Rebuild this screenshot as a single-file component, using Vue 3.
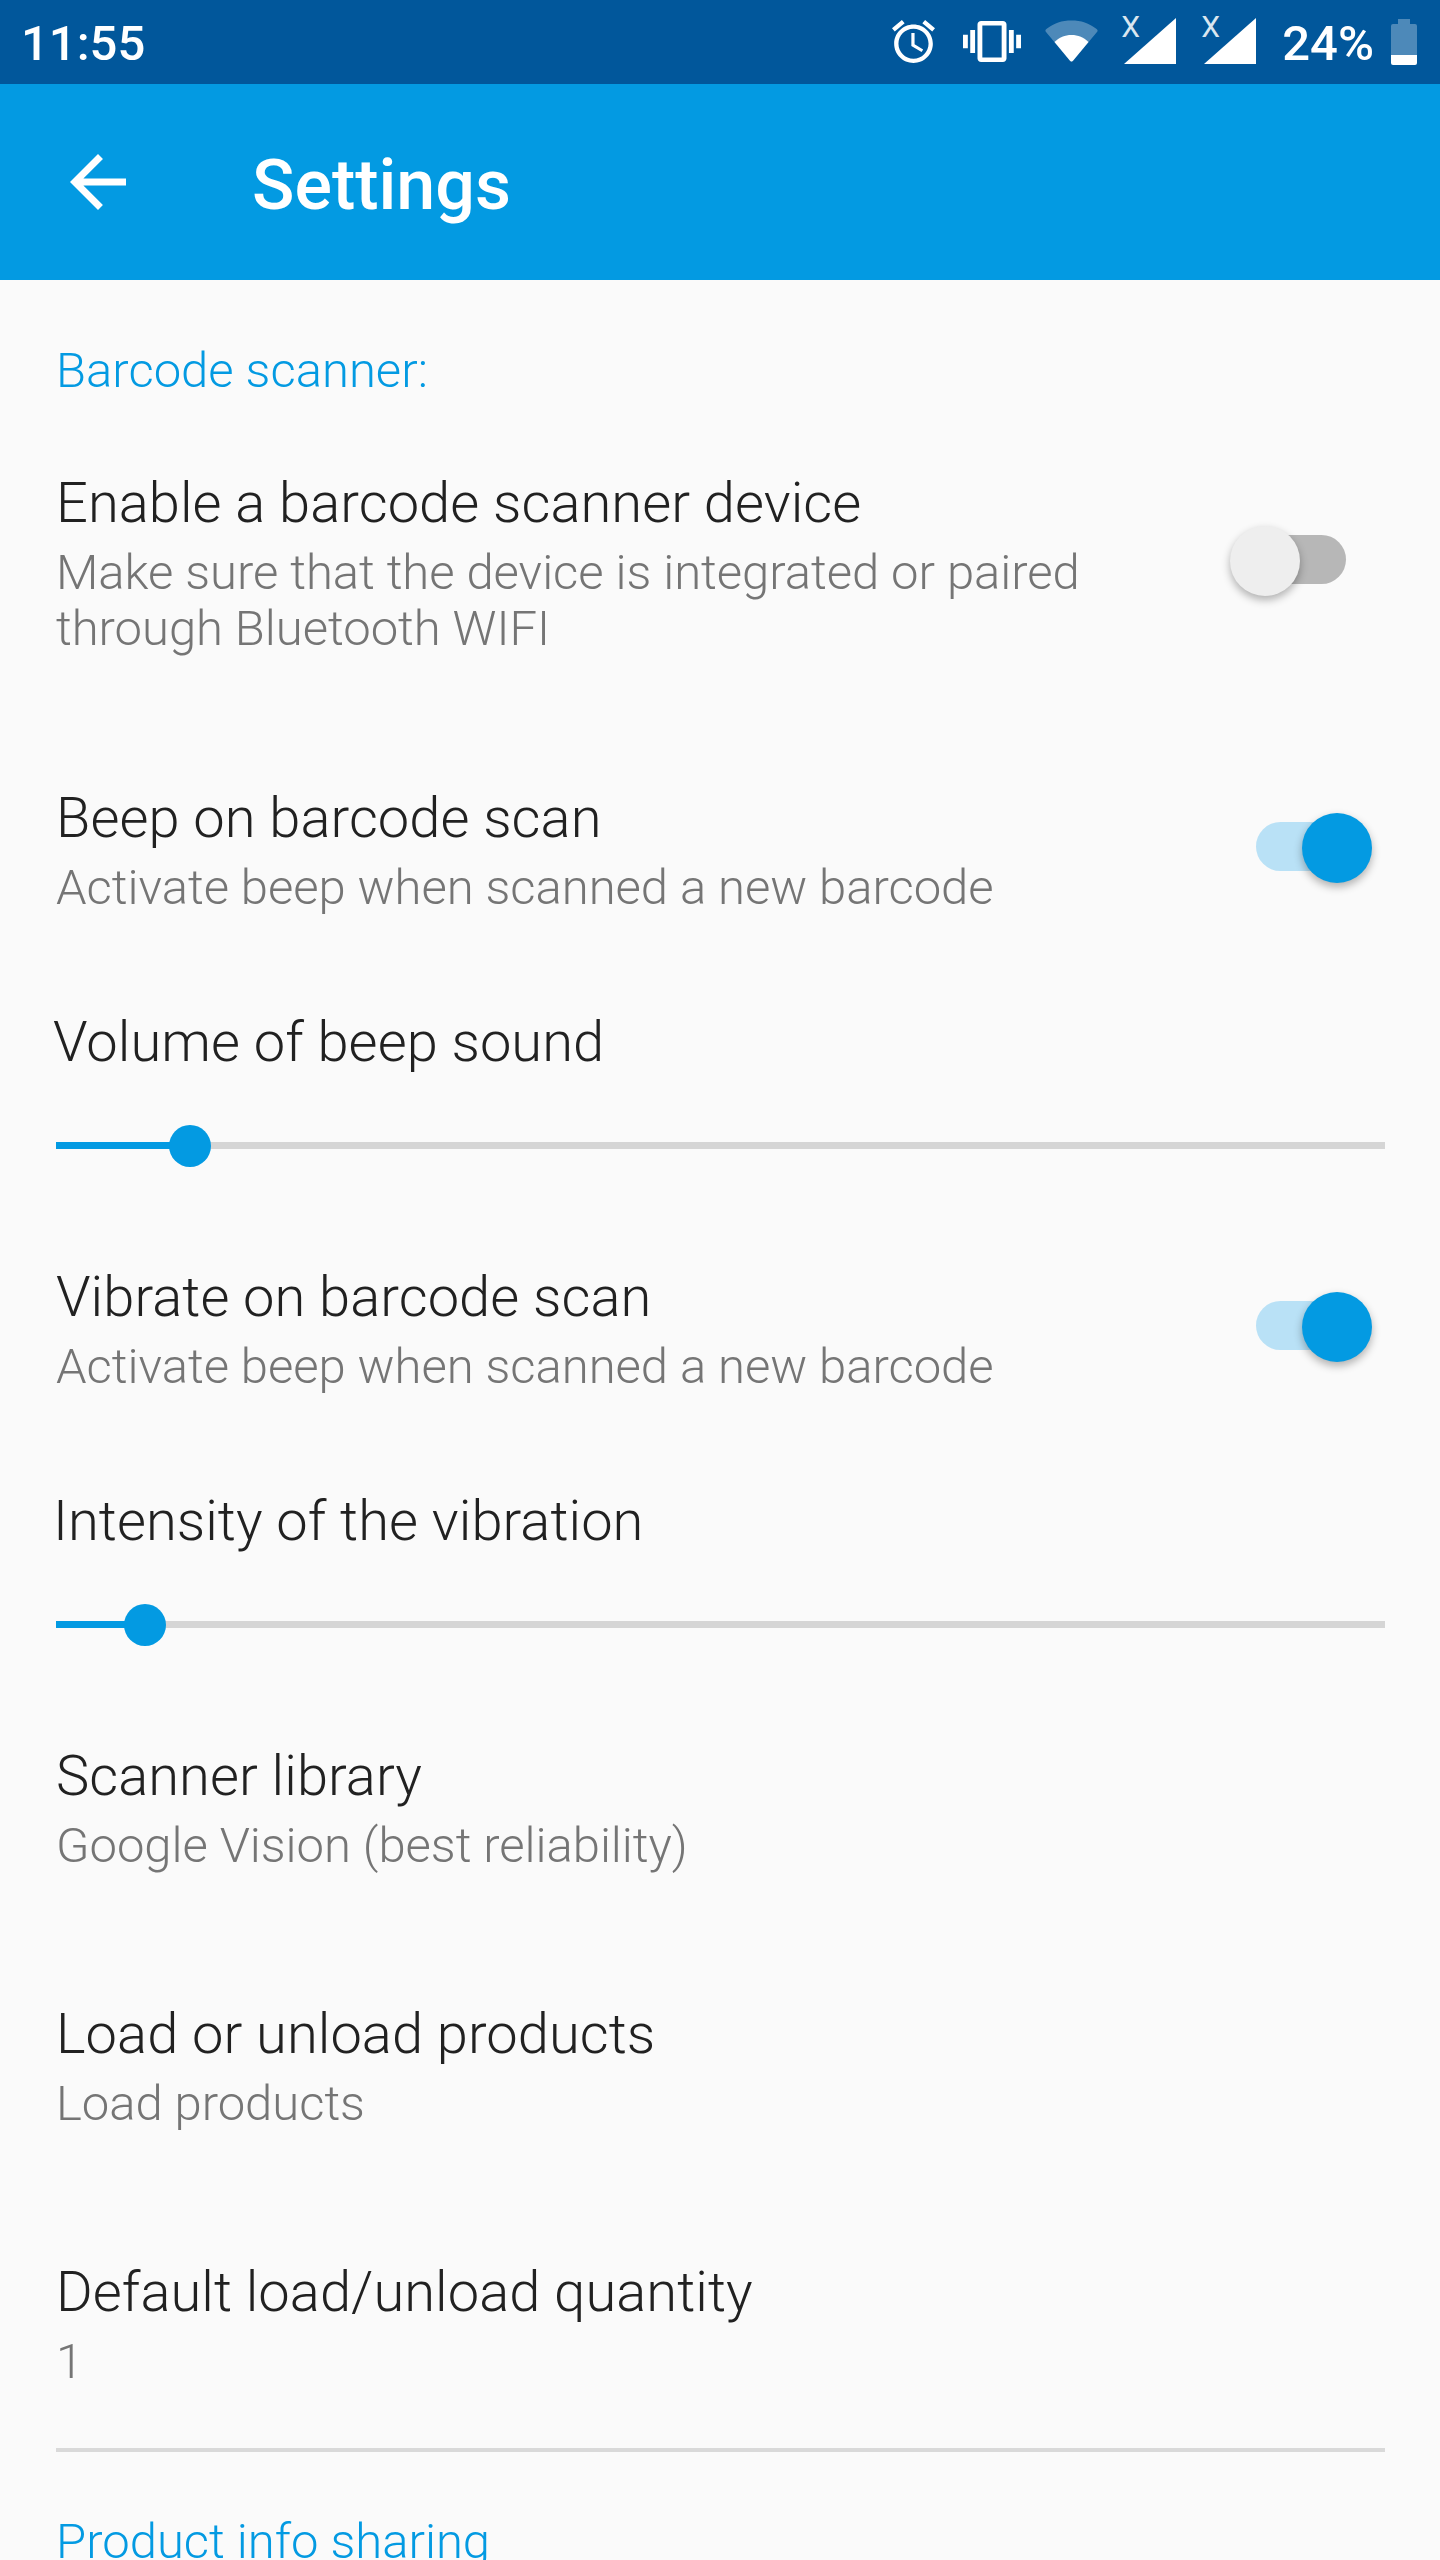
<template>
  <div class="screen">
    <!-- status bar -->
    <div class="status-bar">
      <span class="time">11:55</span>
      <div class="status-icons">
        <svg class="ic-alarm" viewBox="2 1.86 20 20.14" preserveAspectRatio="none">
          <path fill="#fff" d="M22 5.72l-4.6-3.86-1.29 1.53 4.6 3.86L22 5.72zM7.88 3.39L6.6 1.86 2 5.71l1.29 1.53 4.59-3.85zM12.5 8H11v6l4.75 2.85.75-1.23-4-2.37V8zM12 4c-4.97 0-9 4.03-9 9s4.03 9 9 9 9-4.03 9-9-4.03-9-9-9zm0 16c-3.87 0-7-3.13-7-7s3.13-7 7-7 7 3.13 7 7-3.13 7-7 7z" />
        </svg>
        <svg class="ic-vibrate" viewBox="0 3 24 18" preserveAspectRatio="none">
          <path fill="#fff" d="M0 15h2V9H0v6zm3 2h2V7H3v10zm19-8v6h2V9h-2zm-3 8h2V7h-2v10zM16.5 3h-9C6.67 3 6 3.67 6 4.5v15c0 .83.67 1.5 1.5 1.5h9c.83 0 1.5-.67 1.5-1.5v-15c0-.83-.67-1.5-1.5-1.5zM16 19H8V5h8v14z" />
        </svg>
        <svg class="ic-wifi" viewBox="0 0 53 42">
          <path fill="#fff" fill-opacity="0.3" d="M0.6 11.5 Q0 9.8 1.4 9 C9 3 17 0.5 26.5 0.5 C36 0.5 44 3 51.6 9 Q53 9.8 52.4 11.5 L28 40.8 Q26.5 42.5 25 40.8 Z" />
          <path fill="#fff" d="M9.5 22 C14 17.5 20 15 26.5 15 C33 15 39 17.5 43.5 22 L28.2 40.6 Q26.5 42.5 24.8 40.6 Z" />
        </svg>
        <div v-for="n in 2" :key="n" class="signal">
          <svg viewBox="0 0 52 46"><path fill="#fff" d="M52 0V46H0Z" /></svg>
          <span class="signal-x">X</span>
        </div>
        <span class="battery-text">24%</span>
        <svg class="ic-battery" viewBox="0 0 26 46">
          <path fill="#fff" fill-opacity="0.3" d="M7 0h12v5h5q2 0 2 2v29H0V7q0-2 2-2h5z" />
          <path fill="#fff" d="M0 36h26v8q0 2-2 2H2q-2 0-2-2z" />
        </svg>
      </div>
    </div>

    <!-- app bar -->
    <div class="app-bar">
      <svg class="back" viewBox="4 4 16 16">
        <path fill="#fff" d="M20 11H7.83l5.59-5.59L12 4l-8 8 8 8 1.41-1.41L7.83 13H20v-2z" />
      </svg>
      <span class="app-title">Settings</span>
    </div>

    <div class="content">
      <div class="category">Barcode scanner:</div>

      <div v-for="item in settings" :key="item.title" :class="['row', item.type]">
        <div class="row-main">
          <div class="row-text">
            <div class="title">{{ item.title }}</div>
            <div v-if="item.sub" class="sub">{{ item.sub }}</div>
          </div>
          <div v-if="item.type === 'toggle' || item.type === 'tall'" :class="['switch', { on: item.on }]">
            <div class="track"></div>
            <div class="thumb"></div>
          </div>
        </div>
        <div v-if="item.type === 'slider'" class="seek">
          <div class="seek-track"></div>
          <div class="seek-fill" :style="{ width: item.pos + 'px' }"></div>
          <div class="seek-thumb" :style="{ left: item.pos - 21 + 'px' }"></div>
        </div>
      </div>

      <div class="divider"></div>
      <div class="category second">Product info sharing</div>
    </div>
  </div>
</template>

<script setup>
const settings = [
  {
    type: "tall",
    title: "Enable a barcode scanner device",
    sub: "Make sure that the device is integrated or paired through Bluetooth WIFI",
    on: false,
  },
  { type: "toggle", title: "Beep on barcode scan", sub: "Activate beep when scanned a new barcode", on: true },
  { type: "slider", title: "Volume of beep sound", pos: 134 },
  { type: "toggle", title: "Vibrate on barcode scan", sub: "Activate beep when scanned a new barcode", on: true },
  { type: "slider", title: "Intensity of the vibration", pos: 89 },
  { type: "plain", title: "Scanner library", sub: "Google Vision (best reliability)" },
  { type: "plain", title: "Load or unload products", sub: "Load products" },
  { type: "last", title: "Default load/unload quantity", sub: "1" },
];
</script>

<style>
html,
body {
  margin: 0;
  background: #fafafa;
}
</style>

<style scoped>
.screen {
  width: 1440px;
  height: 2560px;
  overflow: hidden;
  background: #fafafa;
  font-family: Roboto, "Liberation Sans", sans-serif;
}

.status-bar {
  height: 84px;
  box-sizing: border-box;
  padding: 0 23px 0 21px;
  background: #01579b;
  color: #fff;
  display: flex;
  align-items: center;
  justify-content: space-between;
}

.time {
  font-size: 49px;
  font-weight: 500;
  line-height: 84px;
  padding-top: 3px;
}

.status-icons {
  display: flex;
  align-items: flex-start;
  height: 84px;
}

.ic-alarm {
  width: 43px;
  height: 43px;
  margin-top: 20px;
}

.ic-vibrate {
  width: 58px;
  height: 41px;
  margin: 21px 0 0 28px;
}

.ic-wifi {
  width: 53px;
  height: 42px;
  margin: 20px 0 0 24px;
}

.signal {
  position: relative;
  width: 52px;
  height: 46px;
  margin: 18px 0 0 26px;
}

.signal svg {
  display: block;
  width: 52px;
  height: 46px;
}

.signal-x {
  position: absolute;
  left: -3px;
  top: -6px;
  font-size: 30px;
  line-height: 30px;
  color: #d9e6f0;
}

.signal + .signal {
  margin-left: 28px;
}

.battery-text {
  margin-left: 26px;
  font-size: 49px;
  font-weight: 500;
  line-height: 84px;
  padding-top: 2px;
}

.ic-battery {
  width: 26px;
  height: 46px;
  margin: 19px 0 0 17px;
}

.app-bar {
  height: 196px;
  background: #039ae2;
  display: flex;
  align-items: center;
}

.back {
  width: 56px;
  height: 56px;
  margin-left: 70px;
}

.app-title {
  margin-left: 126px;
  padding-top: 5px;
  color: #fff;
  font-size: 70px;
  font-weight: 500;
}

.content {
  padding: 63px 55px 0 56px;
}

.category {
  margin-bottom: 26px;
  color: #039ae2;
  font-size: 49px;
  font-weight: 300;
  line-height: 56px;
}

.row {
  padding: 40px 0 48px;
}

.row.tall {
  padding-bottom: 83px;
}

.row.plain {
  padding-bottom: 82px;
}

.row.last {
  padding-bottom: 58px;
}

.row.slider {
  padding-bottom: 52px;
}

.row-main {
  display: flex;
  align-items: center;
  justify-content: space-between;
}

.row-text {
  max-width: 1120px;
}

.row.slider .row-text {
  margin-left: -3px;
}

.title {
  color: #212121;
  font-size: 56px;
  font-weight: 300;
  line-height: 72px;
  letter-spacing: 0.06px;
  padding-top: 2px;
}

.sub {
  margin-top: 6px;
  color: #757575;
  font-size: 49px;
  font-weight: 300;
  line-height: 56px;
  letter-spacing: -0.04px;
}

.switch {
  position: relative;
  flex: none;
  width: 148px;
  height: 70px;
  margin-right: 10px;
}

.track {
  position: absolute;
  top: 9px;
  left: 10px;
  width: 109px;
  height: 49px;
  border-radius: 25px;
  background: #b7b7b7;
}

.thumb {
  position: absolute;
  top: 0;
  left: 3px;
  width: 70px;
  height: 70px;
  border-radius: 50%;
  background: #eeeeee;
  box-shadow: 0 4px 8px rgba(0, 0, 0, 0.3);
}

.switch.on .track {
  left: 29px;
  width: 100px;
  background: #b9e1f6;
}

.switch.on .thumb {
  left: 75px;
  background: #039ae2;
}

.seek {
  position: relative;
  height: 42px;
  margin-top: 47px;
}

.seek-track,
.seek-fill {
  position: absolute;
  left: 0;
  top: 17px;
  height: 7px;
}

.seek-track {
  width: 100%;
  background: #d5d5d5;
}

.seek-fill {
  background: #039ae2;
}

.seek-thumb {
  position: absolute;
  top: 0;
  width: 42px;
  height: 42px;
  border-radius: 50%;
  background: #039ae2;
}

.divider {
  height: 4px;
  background: #d9d9d9;
}

.category.second {
  margin-top: 62px;
}
</style>
